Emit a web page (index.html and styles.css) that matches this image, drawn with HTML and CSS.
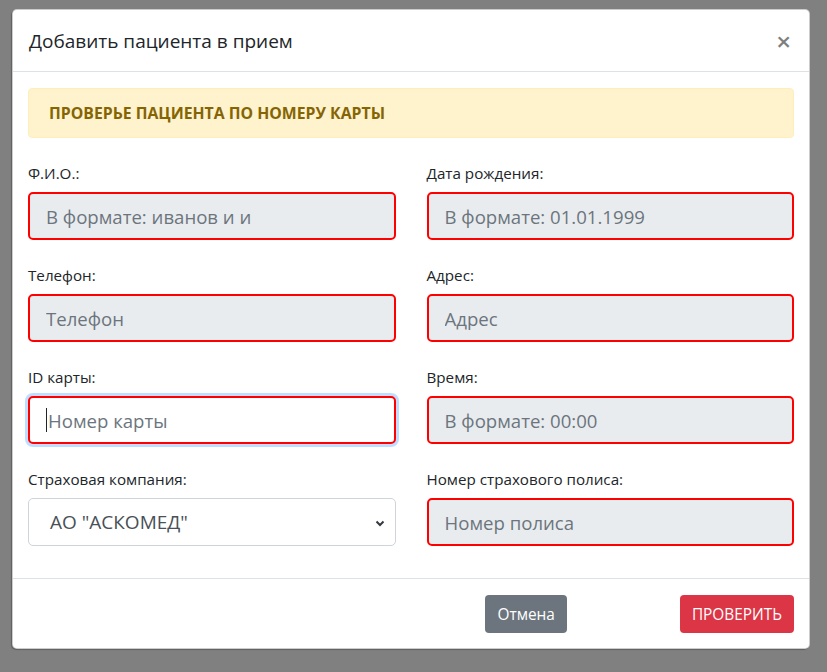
FILE: index.html
```html
<!DOCTYPE html>
<html lang="ru">
<head>
<meta charset="utf-8">
<title>Добавить пациента в прием</title>
<link rel="stylesheet" href="styles.css">
</head>
<body>
<div class="modal">
  <div class="modal-header">
    <h5 class="modal-title">Добавить пациента в прием</h5>
    <span class="close">&times;</span>
  </div>
  <div class="modal-body">
    <div class="alert">ПРОВЕРЬЕ ПАЦИЕНТА ПО НОМЕРУ КАРТЫ</div>
    <div class="grid">
      <div class="group">
        <label class="label">Ф.И.О.:</label>
        <input class="field locked" placeholder="В формате: иванов и и" readonly>
      </div>
      <div class="group">
        <label class="label">Дата рождения:</label>
        <input class="field locked" placeholder="В формате: 01.01.1999" readonly>
      </div>
      <div class="group">
        <label class="label">Телефон:</label>
        <input class="field locked" placeholder="Телефон" readonly>
      </div>
      <div class="group">
        <label class="label">Адрес:</label>
        <input class="field locked" placeholder="Адрес" readonly>
      </div>
      <div class="group">
        <label class="label">ID карты:</label>
        <div class="field focused"><span class="caret"></span><span class="ph">Номер карты</span></div>
      </div>
      <div class="group">
        <label class="label">Время:</label>
        <input class="field locked" placeholder="В формате: 00:00" readonly>
      </div>
      <div class="group">
        <label class="label">Страховая компания:</label>
        <div class="select">
          <span>АО "АСКОМЕД"</span>
          <svg class="chev" width="10" height="8" viewBox="0 0 10 8"><path d="M1.5 2.5 L5 6 L8.5 2.5" fill="none" stroke="#343a40" stroke-width="2"/></svg>
        </div>
      </div>
      <div class="group">
        <label class="label">Номер страхового полиса:</label>
        <input class="field locked" placeholder="Номер полиса" readonly>
      </div>
    </div>
  </div>
  <div class="modal-footer">
    <button class="btn btn-gray">Отмена</button>
    <button class="btn btn-red">ПРОВЕРИТЬ</button>
  </div>
</div>
</body>
</html>
```
FILE: styles.css
```css
* { box-sizing: border-box; }
html, body { margin: 0; padding: 0; }
body {
  background: #808080;
  font-family: "Open Sans", "Noto Sans", sans-serif;
  color: #212529;
  height: 672px;
  overflow: hidden;
  padding-top: 9px;
  padding-left: 12px;
}
.modal {
  width: 798px;
  background: #fff;
  border: 1px solid rgba(0,0,0,.2);
  border-radius: 5px;
  box-shadow: -1px 1px 1px rgba(0,0,0,.25);
}
.modal-header {
  display: flex;
  align-items: center;
  justify-content: space-between;
  padding: 16px 16px 15px;
  border-bottom: 1px solid #dee2e6;
}
.modal-title {
  margin: 0;
  font-size: 19px;
  font-weight: 500;
  line-height: 30px;
}
.close {
  font-size: 26px;
  font-weight: 600;
  line-height: 1;
  color: #000;
  opacity: .5;
  margin-right: 2px;
}
.modal-body {
  padding: 16px 15px 16px;
}
.alert {
  background: #fff3cd;
  border: 1px solid #ffeeba;
  border-radius: 4px;
  color: #856404;
  font-weight: 700;
  font-size: 15.8px;
  line-height: 24px;
  padding: 12px 20px;
  margin-bottom: 16px;
}
.grid {
  display: grid;
  grid-template-columns: 1fr 1fr;
  column-gap: 31px;
}
.group {
  display: flex;
  flex-direction: column;
  margin-bottom: 16px;
}
.label {
  font-size: 15.2px;
  line-height: 22px;
  margin: 8px 0 8px;
}
.field {
  height: 48px;
  width: 100%;
  border: 2px solid #ff0000;
  border-radius: 5px;
  padding: 0 16px;
  font-family: inherit;
  font-size: 18.6px;
  color: #495057;
  outline: none;
}
.field::placeholder { color: #6c757d; opacity: 1; }
.locked { background: #e9ecef; }
.focused {
  background: #fff;
  display: flex;
  align-items: center;
  box-shadow: 0 0 0 3px rgba(0,123,255,.25);
}
.caret {
  width: 1px;
  height: 24px;
  background: #212529;
  margin-right: 1px;
}
.ph { color: #6c757d; }
.select {
  height: 48px;
  border: 1px solid #ced4da;
  border-radius: 5px;
  padding: 0 10px 0 21px;
  display: flex;
  align-items: center;
  justify-content: space-between;
  font-size: 19px;
  color: #495057;
  background: #fff;
}
.chev { margin-top: 2px; }
.modal-footer {
  border-top: 1px solid #dee2e6;
  padding: 16px 15px 15px;
  display: flex;
  justify-content: flex-end;
  gap: 113px;
}
.btn {
  height: 38px;
  border: 0;
  border-radius: 4px;
  color: #fff;
  font-family: inherit;
  font-size: 15.4px;
  padding: 0 12px;
}
.btn-gray { background: #6c757d; }
.btn-red { background: #dc3545; }
```
